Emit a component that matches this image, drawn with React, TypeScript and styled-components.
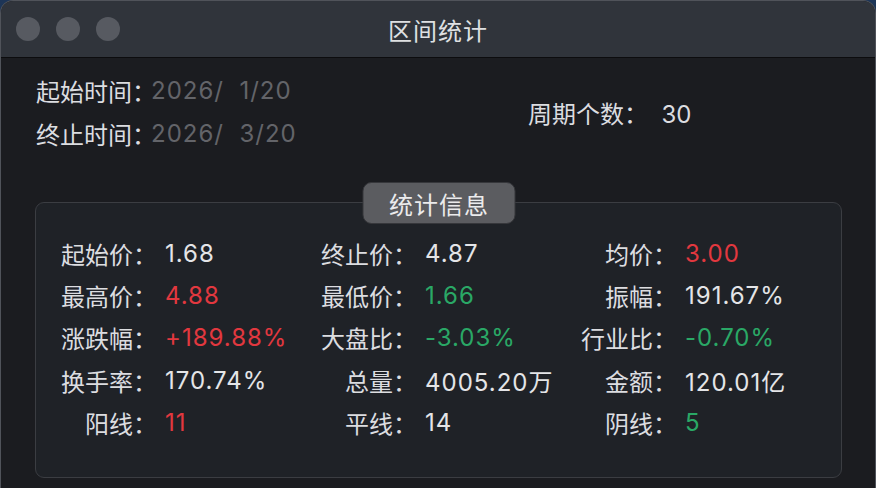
import React from "react";
import styled, { createGlobalStyle } from "styled-components";

const Global = createGlobalStyle`
  html, body { margin: 0; padding: 0; background: #1d3557; }
  body { font-family: "Inter", "Noto Sans CJK SC", sans-serif; }
  #root { width: 876px; height: 488px; }
`;

const Window = styled.div`
  width: 876px;
  height: 488px;
  box-sizing: border-box;
  border-radius: 13px 13px 0 0;
  border: 1px solid #50535a;
  border-bottom: none;
  overflow: hidden;
  background: #1b1c20;
  display: flex;
  flex-direction: column;
  font-family: "Inter", "Noto Sans CJK SC", sans-serif;
`;

const TitleBar = styled.div`
  height: 56px;
  flex: none;
  background: #30343b;
  border-bottom: 1px solid #0c0c0e;
  display: grid;
  grid-template-columns: 1fr auto 1fr;
  align-items: center;
  padding: 0 15px;
`;

const Lights = styled.div`
  display: flex;
  gap: 16px;
`;

const Light = styled.span`
  width: 24px;
  height: 24px;
  border-radius: 50%;
  background: #575a61;
`;

const Title = styled.div`
  font-size: 24px;
  letter-spacing: 1px;
  color: #dfe0e2;
`;

const Body = styled.div`
  flex: 1;
  display: flex;
  flex-direction: column;
  padding: 11px 0 10px 34px;
`;

const Top = styled.div`
  display: flex;
  align-items: center;
  height: 86px;
`;

const DateCol = styled.div`
  width: 492px;
  padding-left: 1px;
  display: flex;
  flex-direction: column;
`;

const DateRow = styled.div`
  height: 43px;
  display: flex;
  align-items: center;
  font-size: 24px;
  white-space: pre;
`;

const DateLabel = styled.span`
  color: #dcdde0;
`;

const DateValue = styled.span`
  color: #636469;
  margin-left: -5px;
  letter-spacing: 1px;
`;

const Period = styled.div`
  font-size: 24px;
  color: #dcdde0;
  white-space: pre;
`;

const Box = styled.div`
  position: relative;
  margin-top: 47px;
  width: 807px;
  height: 276px;
  box-sizing: border-box;
  border: 1px solid #3b3d42;
  border-radius: 9px;
  background: #1f2227;
  padding: 29px 0 0 25px;
`;

const Tab = styled.div`
  position: absolute;
  top: -21px;
  left: 50%;
  transform: translateX(-50%);
  width: 153px;
  height: 42px;
  box-sizing: border-box;
  border: 1px solid #36373b;
  border-radius: 9px;
  background: #5b5c60;
  color: #ebebec;
  font-size: 24px;
  display: flex;
  align-items: center;
  justify-content: center;
  letter-spacing: 1px;
  padding-left: 1px;
`;

const Grid = styled.div`
  display: grid;
  grid-template-columns: repeat(3, 260px);
  grid-auto-rows: 42.3px;
`;

const Cell = styled.div`
  display: grid;
  grid-template-columns: 104px auto;
  align-items: center;
  font-size: 24px;
`;

const Label = styled.span`
  text-align: right;
  padding-right: 8px;
  color: #dcdde0;
`;

type Tone = "plain" | "up" | "down";

const Value = styled.span<{ $tone: Tone }>`
  letter-spacing: 1px;
  color: ${(p) =>
    p.$tone === "up" ? "#e2383f" : p.$tone === "down" ? "#2aa866" : "#e4e5e7"};
`;

const stats: [string, string, Tone][] = [
  ["起始价：", "1.68", "plain"],
  ["终止价：", "4.87", "plain"],
  ["均价：", "3.00", "up"],
  ["最高价：", "4.88", "up"],
  ["最低价：", "1.66", "down"],
  ["振幅：", "191.67%", "plain"],
  ["涨跌幅：", "+189.88%", "up"],
  ["大盘比：", "-3.03%", "down"],
  ["行业比：", "-0.70%", "down"],
  ["换手率：", "170.74%", "plain"],
  ["总量：", "4005.20万", "plain"],
  ["金额：", "120.01亿", "plain"],
  ["阳线：", "11", "up"],
  ["平线：", "14", "plain"],
  ["阴线：", "5", "down"],
];

export default function App() {
  return (
    <>
      <Global />
      <Window>
        <TitleBar>
          <Lights>
            <Light />
            <Light />
            <Light />
          </Lights>
          <Title>区间统计</Title>
          <span />
        </TitleBar>
        <Body>
          <Top>
            <DateCol>
              <DateRow>
                <DateLabel>起始时间：</DateLabel>
                <DateValue>2026/  1/20</DateValue>
              </DateRow>
              <DateRow>
                <DateLabel>终止时间：</DateLabel>
                <DateValue>2026/  3/20</DateValue>
              </DateRow>
            </DateCol>
            <Period>周期个数：  30</Period>
          </Top>
          <Box>
            <Tab>统计信息</Tab>
            <Grid>
              {stats.map(([l, v, t]) => (
                <Cell key={l}>
                  <Label>{l}</Label>
                  <Value $tone={t}>{v}</Value>
                </Cell>
              ))}
            </Grid>
          </Box>
        </Body>
      </Window>
    </>
  );
}
